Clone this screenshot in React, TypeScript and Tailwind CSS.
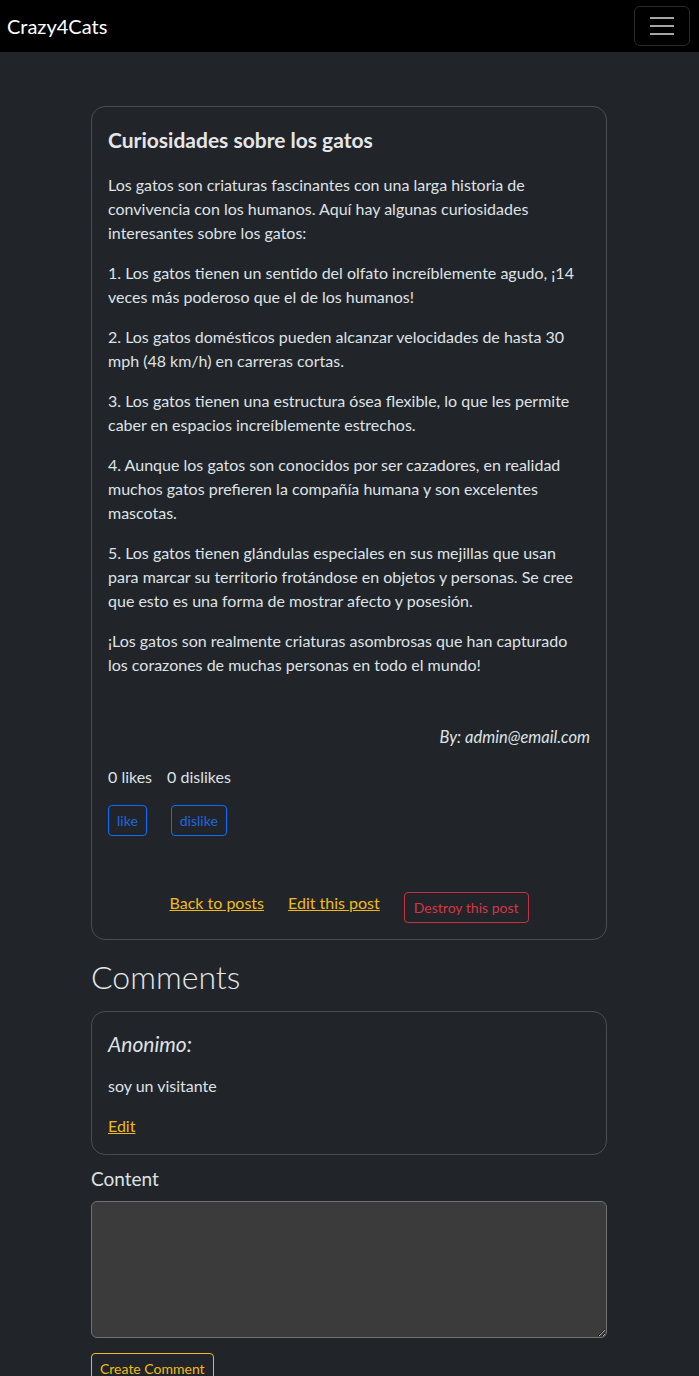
import React from "react";

const paras = [
  "Los gatos son criaturas fascinantes con una larga historia de convivencia con los humanos. Aquí hay algunas curiosidades interesantes sobre los gatos:",
  "1. Los gatos tienen un sentido del olfato increíblemente agudo, ¡14 veces más poderoso que el de los humanos!",
  "2. Los gatos domésticos pueden alcanzar velocidades de hasta 30 mph (48 km/h) en carreras cortas.",
  "3. Los gatos tienen una estructura ósea flexible, lo que les permite caber en espacios increíblemente estrechos.",
  "4. Aunque los gatos son conocidos por ser cazadores, en realidad muchos gatos prefieren la compañía humana y son excelentes mascotas.",
  "5. Los gatos tienen glándulas especiales en sus mejillas que usan para marcar su territorio frotándose en objetos y personas. Se cree que esto es una forma de mostrar afecto y posesión.",
  "¡Los gatos son realmente criaturas asombrosas que han capturado los corazones de muchas personas en todo el mundo!",
];

export default function App() {
  return (
    <div
      className="min-h-[1376px] bg-[#212529] text-[#dee2e6]"
      style={{ fontFamily: "Lato, 'Noto Sans', sans-serif" }}
    >
      <nav className="h-[52px] bg-black flex items-center justify-between pl-[7px] pr-[9px]">
        <span className="text-[20px] text-white leading-none">Crazy4Cats</span>
        <button className="w-[56px] h-[40px] border border-[#2a2a2a] rounded-[6px] flex flex-col items-center justify-center gap-[6px]">
          <span className="block w-[24px] h-[2px] bg-[#a6a6a6]" />
          <span className="block w-[24px] h-[2px] bg-[#a6a6a6]" />
          <span className="block w-[24px] h-[2px] bg-[#a6a6a6]" />
        </button>
      </nav>

      <main className="w-[516px] ml-[91px] pt-[54px]">
        <div className="border border-[#4a4d51] rounded-[14px] px-4 pt-4 pb-4">
          <h5 className="text-[21px] font-bold leading-[34px] mb-4 text-[#e4e6e9]">
            Curiosidades sobre los gatos
          </h5>
          {paras.map((p, i) => (
            <p key={i} className="text-[16px] leading-[24px] mb-4">
              {p}
            </p>
          ))}
          <p className="text-right italic text-[16.5px] leading-[24px] mt-[48px]">
            By: admin@email.com
          </p>
          <div className="flex gap-[15px] text-[16px] leading-[24px] mt-4">
            <span>0 likes</span>
            <span>0 dislikes</span>
          </div>
          <div className="flex gap-[24px] mt-4">
            <button className="border border-[#0d6efd] text-[#1f66e0] rounded-[4px] px-[8px] h-[31px] text-[14px]">
              like
            </button>
            <button className="border border-[#0d6efd] text-[#1f66e0] rounded-[4px] px-[8px] h-[31px] text-[14px]">
              dislike
            </button>
          </div>
          <div className="flex items-start justify-center gap-[24px] mt-[56px]">
            <a className="text-[#f0ba1e] underline text-[16px] leading-[24px] -mt-[1px]">
              Back to posts
            </a>
            <a className="text-[#f0ba1e] underline text-[16px] leading-[24px] -mt-[1px]">
              Edit this post
            </a>
            <button className="border border-[#c8313f] text-[#d43545] rounded-[4px] px-[9px] h-[31px] text-[14px]">
              Destroy this post
            </button>
          </div>
        </div>

        <h1 className="text-[32px] font-light leading-[40px] mt-[17px] mb-[14px] text-[#e4e6e9]">
          Comments
        </h1>

        <div className="border border-[#4a4d51] rounded-[14px] px-4 pt-4 pb-4">
          <h5 className="italic text-[21px] leading-[32px] mb-[14px]">Anonimo:</h5>
          <p className="text-[16px] leading-[24px] mb-4">soy un visitante</p>
          <a className="text-[#f0ba1e] underline text-[16px] leading-[24px] block">Edit</a>
        </div>

        <label className="block text-[19px] leading-[24px] mt-[12px] mb-[10px]">Content</label>
        <textarea className="block w-full h-[137px] bg-[#3b3b3b] border border-[#707070] rounded-[6px] resize-y" />
        <button className="mt-[15px] border border-[#f0ba1e] text-[#f0ba1e] rounded-[4px] px-[8px] h-[31px] text-[14px]">
          Create Comment
        </button>
      </main>
    </div>
  );
}
